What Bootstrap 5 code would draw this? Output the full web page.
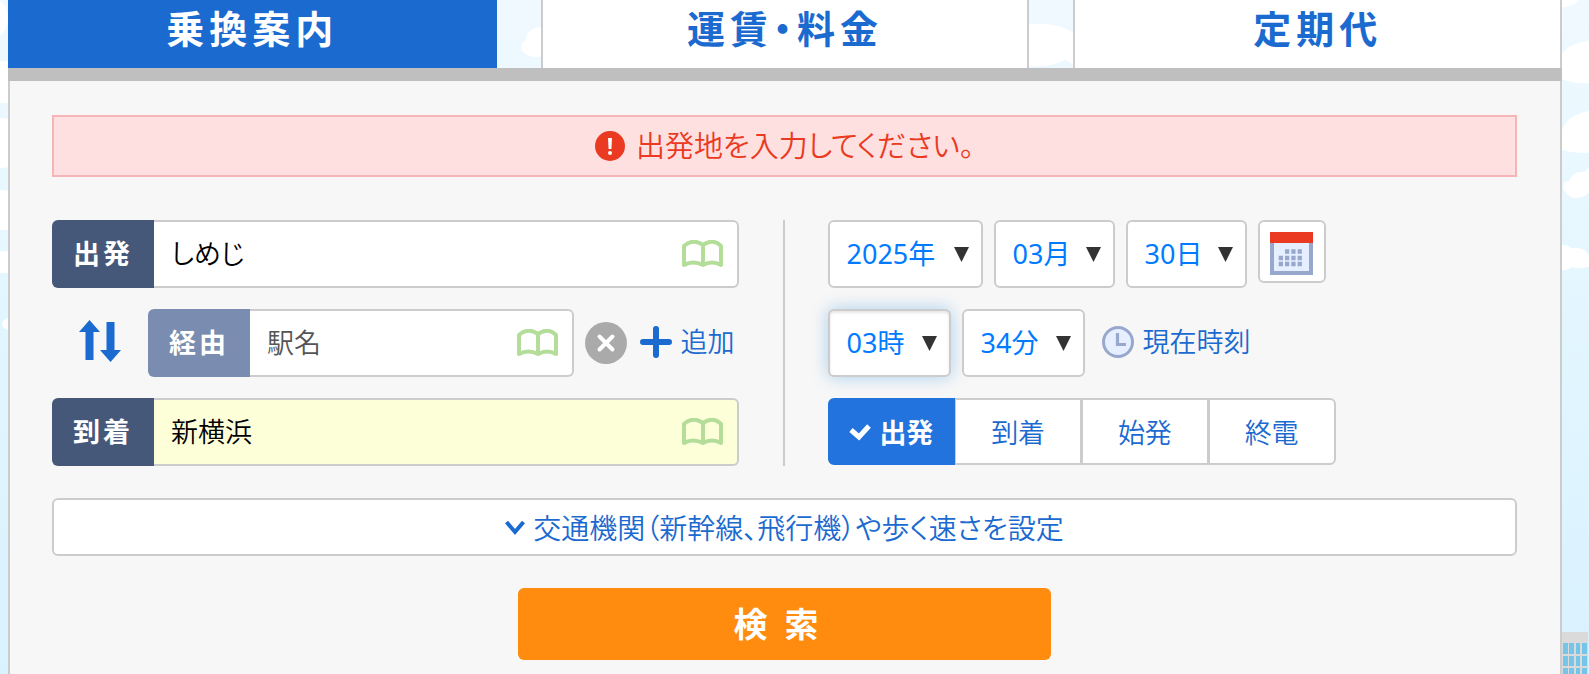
<!DOCTYPE html>
<html lang="ja">
<head>
<meta charset="utf-8">
<meta name="viewport" content="width=device-width, initial-scale=1">
<title>乗換案内</title>
<link href="https://cdn.jsdelivr.net/npm/bootstrap@5.3.0/dist/css/bootstrap.min.css" rel="stylesheet">
<style>
  :root { --line: #ccc; --blue: #1b6ad0; --navy: #465879; }
  body { font-family: "Noto Sans", "Noto Sans CJK JP", sans-serif; font-size: 27px; line-height: 36px; font-weight: 350; font-feature-settings: "palt"; color: #000;
    background: linear-gradient(#f0f9ff 0, #e9f8ff 180px, #e3f6ff 300px, #d9f2ff 100%); }
  a { color: var(--blue); text-decoration: none; }
  .sky { position: absolute; top: 0; z-index: -1; fill: #fff; }
  .planner { margin: 0 27px 0 8px; }
  .mode-tabs { gap: 44px; }
  .mode-tabs .nav-link { height: 68px; padding: 0; border: 2px solid var(--line); border-width: 0 2px; border-radius: 0; background: #fff; color: var(--blue);
    font-family: "Noto Sans CJK JP", sans-serif; font-size: 38px; line-height: 54px; font-weight: 700; letter-spacing: 5px; }
  .mode-tabs .nav-link.active { background: var(--blue); border-color: var(--blue); color: #fff; }
  .panel { background: #f7f7f7; border: 2px solid var(--line); border-width: 0 2px; padding: 34px 43px 12px 42px; }
  .bar-line { height: 13px; background: #bfbfbf; }
  .error-box { height: 62px; border: 2px solid #f5b5b7; background: #ffe0e0; color: #ea3a22; font-size: 29px; gap: 11px; margin-bottom: 43px; }
  .col-places { padding-right: 44px; border-right: 2px solid var(--line); }
  .col-time { padding-left: 43px; }
  .rows { gap: 21px; }
  .line-row { height: 68px; gap: 11px; }
  .place { height: 68px; position: relative; }
  .place label { width: 102px; background: var(--navy); color: #fff; font-weight: 700; letter-spacing: 3px; border-radius: 6px 0 0 6px; }
  .place.via label { background: #7a8caf; }
  .place .form-control, .pick { border: 2px solid var(--line); border-radius: 6px; font: inherit; color: #000; background-color: #fff; font-feature-settings: inherit; }
  .place .form-control { border-left: 0; border-radius: 0 6px 6px 0; padding: 0 72px 0 17px; }
  .place .form-control::placeholder { color: #555; opacity: 1; }
  .place.filled .form-control { background: #fdffd9; }
  .book { position: absolute; right: 15px; top: 13px; border: 0; background: none; padding: 0; height: 42px; display: flex; align-items: center; }
  .swap, .remove { border: 0; background: none; padding: 0; line-height: 0; }
  .swap { margin: 0 16px 4px 27px; }
  .add { gap: 9px; padding: 0 4px 2px 2px; }
  .pick { appearance: none; height: 68px; color: #007bff; font-weight: 400; padding: 0 0 0 17px;
    background: #fff url("data:image/svg+xml,%3Csvg xmlns='http://www.w3.org/2000/svg' width='15' height='15'%3E%3Cpath d='M0 0h15L7.5 15z' fill='%23333'/%3E%3C/svg%3E") no-repeat right 12px center; }
  .pick.year { width: 155px; }
  .pick.part { width: 121px; }
  .pick.clock { width: 123px; }
  .pick.current { box-shadow: 0 0 17px rgba(0,123,220,.32), inset 0 2px 3px rgba(0,0,0,.1); }
  .cal { width: 68px; height: 63px; border: 2px solid var(--line); border-radius: 6px; background: #fff; padding: 4px 0 0; align-self: flex-start; }
  .now { gap: 9px; margin-left: 6px; padding-bottom: 2px; }
  .kind { width: 508px; max-width: 100%; height: 67px; }
  .kind .btn { font-size: 27px; line-height: 36px; font-weight: 350; color: var(--blue); background: #fff; border: 2px solid var(--line); border-radius: 6px; padding: 2px 0 0; flex: 1 1 0; display: flex; align-items: center; justify-content: center; gap: 8px; }
  .kind .btn svg { display: none; }
  .kind .btn-check:checked + .btn { background: #2273dd; border-color: #2273dd; color: #fff; font-weight: 700; }
  .kind .btn-check:checked + .btn svg { display: block; }
  .options { height: 58px; margin-top: 32px; border: 2px solid var(--line); border-radius: 6px; background: #fff; color: var(--blue); gap: 8px; font-size: 28px; font-weight: 350; font-feature-settings: "palt"; padding: 2px 0 0; }
  .search { height: 72px; width: 533px; max-width: 100%; margin: 32px auto 0; border: 0; border-radius: 6px; background: #ff8c0f; color: #fff; font-size: 34px; font-weight: 700; letter-spacing: 17px; padding: 0 0 2px; font-family: "Noto Sans CJK JP", sans-serif; }
</style>
</head>
<body class="min-vh-100 d-flex flex-column position-relative">

<!-- Clouds and the building at the edge of the sky -->
<svg class="sky start-0" width="1100" height="400" aria-hidden="true">
  <ellipse cx="-6" cy="18" rx="14" ry="19"/><ellipse cx="2" cy="82" rx="30" ry="21"/><ellipse cx="0" cy="143" rx="34" ry="25"/>
  <ellipse cx="2" cy="210" rx="26" ry="20"/><ellipse cx="4" cy="262" rx="18" ry="11"/><ellipse cx="10" cy="324" rx="8" ry="6"/>
  <ellipse cx="536" cy="47" rx="15" ry="10"/><ellipse cx="541" cy="39" rx="15" ry="12"/>
  <path d="M1029 24q27-2 44 8v33q-4-4-8-5q-15 8-36 6z"/>
</svg>
<svg class="sky end-0" width="27" height="674" aria-hidden="true">
  <path d="M0 7q12 0 17-7H0zM0 54q7-11 27-13v42q-16 1-27-4zM0 130q5-15 27-19v42q-18 0-27-3zM1 189q-1-8 6-8q4-10 15-9l5-4v25q-16 12-26-4zM0 245q7 0 9 3q12-2 18 7v12q-12 2-17 0q-6 4-10 3z"/>
  <path d="M0 632h26v42H0z" fill="#dadada"/>
  <path d="M1 643h5v11H1zM7 643h5v11H7zM14 643h4v11h-4zM20 643h5v11h-5zM1 656h5v10H1zM7 656h5v10H7zM14 656h4v10h-4zM20 656h5v10h-5zM1 668h5v6H1zM7 668h5v6H7zM14 668h4v6h-4zM20 668h5v6h-5z" fill="#75c5e9"/>
</svg>
<svg class="d-none" aria-hidden="true">
  <symbol id="book" viewBox="0 0 42 28"><path d="M2 25V6Q11-2 21 5Q31-2 39 6V25Q30 20 21 25Q11 20 2 25ZM21 5V25" fill="none" stroke="#b4dd9a" stroke-width="4" stroke-linejoin="round"/></symbol>
</svg>

<main class="planner flex-grow-1 d-flex flex-column">
  <nav class="mode-tabs nav nav-justified flex-nowrap">
    <a class="nav-link active" href="#" aria-current="page">乗換案内</a>
    <a class="nav-link" href="#">運賃・料金</a>
    <a class="nav-link" href="#">定期代</a>
  </nav>
  <div class="bar-line"></div>

  <form class="panel flex-grow-1" onsubmit="return false">
    <div class="error-box d-flex align-items-center justify-content-center" role="alert">
      <svg width="30" height="30" viewBox="0 0 30 30" aria-hidden="true"><circle cx="15" cy="15" r="15" fill="#ea3a22"/><path d="M13 7h4l-.6 11h-2.800z" fill="#fff"/><circle cx="15" cy="22" r="2" fill="#fff"/></svg>
      <span>出発地を入力してください。</span>
    </div>

    <div class="row g-0">
      <div class="col-6 col-places d-flex flex-column rows">
        <div class="place d-flex">
          <label class="d-flex align-items-center justify-content-center flex-shrink-0" for="from">出発</label>
          <input class="form-control" id="from" type="text" value="しめじ">
          <button class="book" type="button" aria-label="出発の候補"><svg width="42" height="28"><use href="#book"/></svg></button>
        </div>
        <div class="line-row d-flex align-items-center">
          <button class="swap" type="button" aria-label="入れ替え">
            <svg width="42" height="42" viewBox="0 0 42 42" fill="#1b6ad0"><path d="M10.500 0L21 12H14.500V40H6.500V12H0z"/><path d="M27.500 2h8v28H42L31.500 42L21 30h6.500z"/></svg>
          </button>
          <div class="place via d-flex flex-grow-1">
            <label class="d-flex align-items-center justify-content-center flex-shrink-0" for="via">経由</label>
            <input class="form-control" id="via" type="text" placeholder="駅名">
            <button class="book" type="button" aria-label="経由の候補"><svg width="42" height="28"><use href="#book"/></svg></button>
          </div>
          <button class="remove" type="button" aria-label="経由を削除">
            <svg width="42" height="42" viewBox="0 0 42 42"><circle cx="21" cy="21" r="21" fill="#aaa"/><path d="M14.500 14.500l13 13m0-13l-13 13" stroke="#fff" stroke-width="4" stroke-linecap="round"/></svg>
          </button>
          <a class="add d-flex align-items-center flex-shrink-0" href="#">
            <svg width="32" height="32" viewBox="0 0 32 32" aria-hidden="true"><path d="M16 3v26M3 16h26" stroke="#1b6ad0" stroke-width="6" stroke-linecap="round"/></svg>追加</a>
        </div>
        <div class="place filled d-flex">
          <label class="d-flex align-items-center justify-content-center flex-shrink-0" for="to">到着</label>
          <input class="form-control" id="to" type="text" value="新横浜">
          <button class="book" type="button" aria-label="到着の候補"><svg width="42" height="28"><use href="#book"/></svg></button>
        </div>
      </div>

      <div class="col-6 col-time d-flex flex-column rows">
        <div class="line-row d-flex align-items-center">
          <select class="pick year" aria-label="年"><option>2025年</option></select>
          <select class="pick part" aria-label="月"><option>03月</option></select>
          <select class="pick part" aria-label="日"><option>30日</option></select>
          <button class="cal d-flex align-items-center justify-content-center" type="button" aria-label="カレンダー">
            <svg width="43" height="43" viewBox="0 0 43 43"><path d="M0 0h43v43H0z" fill="#98a8cd"/><path d="M4 11h35v28H4z" fill="#e6efff"/><path d="M0 0h43v11H0z" fill="#ea3a22"/><path d="M15 19.500h18M8.700 26h24M8.700 32h24" stroke="#98a8cd" stroke-width="4.300" stroke-dasharray="4.300 2"/></svg>
          </button>
        </div>
        <div class="line-row d-flex align-items-center">
          <select class="pick clock current" aria-label="時"><option>03時</option></select>
          <select class="pick clock" aria-label="分"><option>34分</option></select>
          <a class="now d-flex align-items-center" href="#">
            <svg width="32" height="32" viewBox="0 0 32 32" aria-hidden="true"><circle cx="16" cy="16" r="14.500" fill="#e6efff" stroke="#98a8cd" stroke-width="3"/><path d="M15.500 7v11.500H24" fill="none" stroke="#98a8cd" stroke-width="3.200"/></svg>現在時刻</a>
        </div>
        <div class="kind btn-group" role="group" aria-label="時刻の種類">
          <input class="btn-check" type="radio" name="kind" id="k1" checked><label class="btn" for="k1"><svg width="22" height="17" viewBox="0 0 22 17" aria-hidden="true"><path d="M2 6l8 7L20 2" fill="none" stroke="#fff" stroke-width="5"/></svg>出発</label>
          <input class="btn-check" type="radio" name="kind" id="k2"><label class="btn" for="k2">到着</label>
          <input class="btn-check" type="radio" name="kind" id="k3"><label class="btn" for="k3">始発</label>
          <input class="btn-check" type="radio" name="kind" id="k4"><label class="btn" for="k4">終電</label>
        </div>
      </div>
    </div>

    <button class="options w-100 d-flex align-items-center justify-content-center" type="button">
      <svg width="20" height="16" viewBox="0 0 20 16" aria-hidden="true"><path d="M1.500 2L10 12L18.500 2" fill="none" stroke="#1b6ad0" stroke-width="4"/></svg>
      <span>交通機関（新幹線、飛行機）や歩く速さを設定</span>
    </button>
    <button class="search d-block" type="submit">検索</button>
  </form>
</main>
<script src="https://cdn.jsdelivr.net/npm/bootstrap@5.3.0/dist/js/bootstrap.bundle.min.js"></script>
</body>
</html>
